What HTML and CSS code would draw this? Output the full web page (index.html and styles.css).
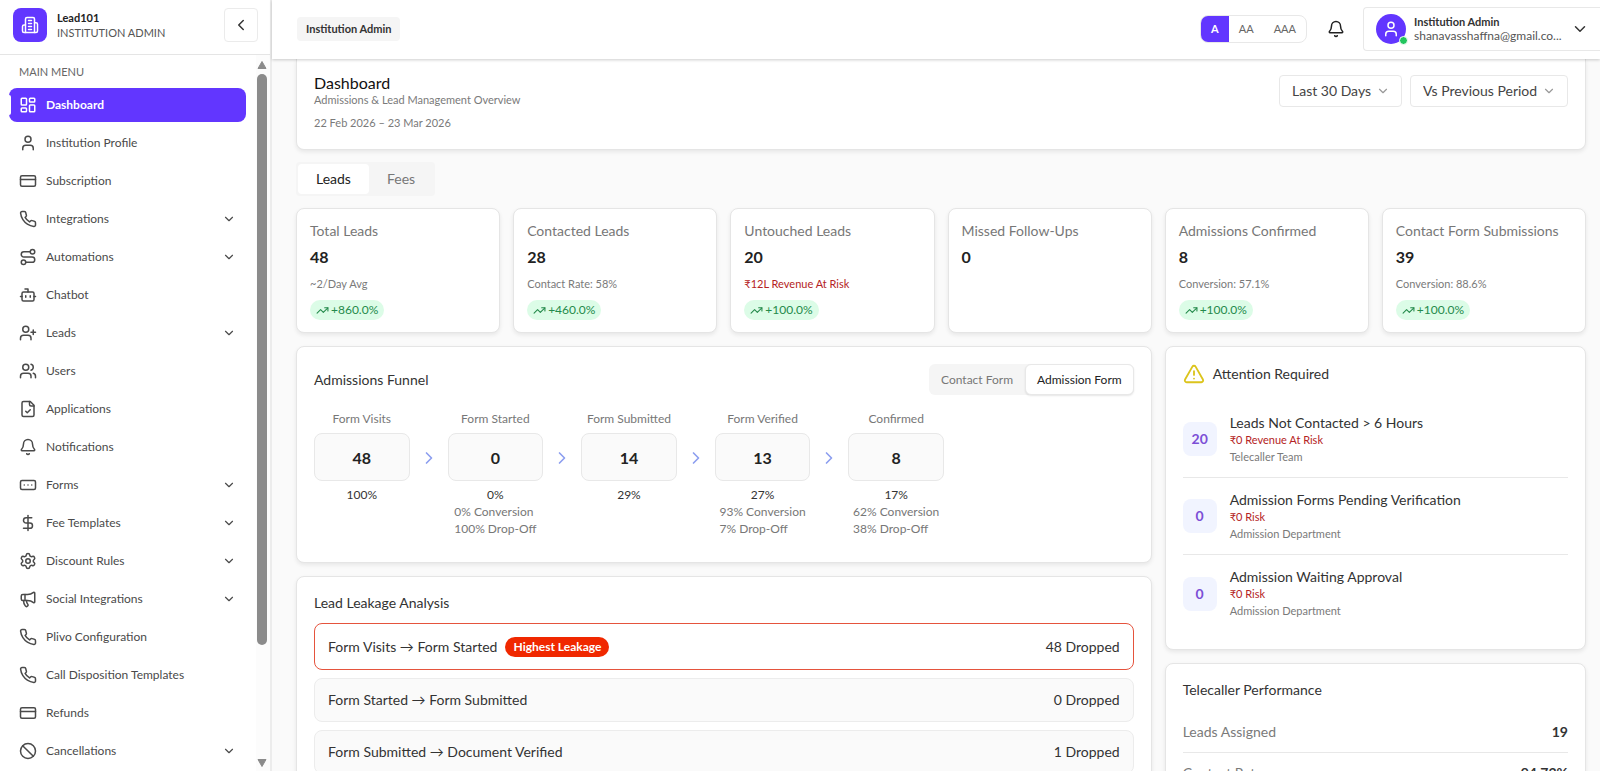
FILE: index.html
```html
<!DOCTYPE html>
<html lang="en">

<head>
    <meta charset="utf-8">
    <meta name="viewport" content="width=device-width, initial-scale=1">
    <title>Lead101 - Dashboard</title>
    <link rel="stylesheet" href="styles.css">
</head>

<body>
    <!-- icon sprite -->
    <svg class="sprite" aria-hidden="true">
        <symbol id="i-building" viewBox="0 0 24 24"><path d="M6 22V4a2 2 0 0 1 2-2h8a2 2 0 0 1 2 2v18Z"/><path d="M6 12H4a2 2 0 0 0-2 2v6a2 2 0 0 0 2 2h2"/><path d="M18 9h2a2 2 0 0 1 2 2v9a2 2 0 0 1-2 2h-2"/><path d="M10 6h4M10 10h4M10 14h4M10 18h4"/></symbol>
        <symbol id="i-dashboard" viewBox="0 0 24 24"><rect width="7" height="9" x="3" y="3" rx="1"/><rect width="7" height="5" x="14" y="3" rx="1"/><rect width="7" height="9" x="14" y="12" rx="1"/><rect width="7" height="5" x="3" y="16" rx="1"/></symbol>
        <symbol id="i-user" viewBox="0 0 24 24"><path d="M19 21v-2a4 4 0 0 0-4-4H9a4 4 0 0 0-4 4v2"/><circle cx="12" cy="7" r="4"/></symbol>
        <symbol id="i-card" viewBox="0 0 24 24"><rect width="20" height="14" x="2" y="5" rx="2"/><path d="M2 10h20"/></symbol>
        <symbol id="i-phone" viewBox="0 0 24 24"><path d="M22 16.92v3a2 2 0 0 1-2.18 2 19.79 19.79 0 0 1-8.63-3.07 19.5 19.5 0 0 1-6-6 19.79 19.79 0 0 1-3.07-8.67A2 2 0 0 1 4.11 2h3a2 2 0 0 1 2 1.72 12.84 12.84 0 0 0 .7 2.81 2 2 0 0 1-.45 2.11L8.09 9.91a16 16 0 0 0 6 6l1.27-1.27a2 2 0 0 1 2.11-.45 12.84 12.84 0 0 0 2.81.7A2 2 0 0 1 22 16.92z"/></symbol>
        <symbol id="i-route" viewBox="0 0 24 24"><circle cx="6" cy="19" r="3"/><path d="M9 19h8.5a3.5 3.5 0 0 0 0-7h-11a3.5 3.5 0 0 1 0-7H15"/><circle cx="18" cy="5" r="3"/></symbol>
        <symbol id="i-bot" viewBox="0 0 24 24"><path d="M12 8V4H8"/><rect width="16" height="12" x="4" y="8" rx="2"/><path d="M2 14h2M20 14h2M15 13v2M9 13v2"/></symbol>
        <symbol id="i-user-plus" viewBox="0 0 24 24"><path d="M16 21v-2a4 4 0 0 0-4-4H6a4 4 0 0 0-4 4v2"/><circle cx="9" cy="7" r="4"/><path d="M19 8v6M22 11h-6"/></symbol>
        <symbol id="i-users" viewBox="0 0 24 24"><path d="M16 21v-2a4 4 0 0 0-4-4H6a4 4 0 0 0-4 4v2"/><circle cx="9" cy="7" r="4"/><path d="M22 21v-2a4 4 0 0 0-3-3.87M16 3.13a4 4 0 0 1 0 7.75"/></symbol>
        <symbol id="i-file" viewBox="0 0 24 24"><path d="M15 2H6a2 2 0 0 0-2 2v16a2 2 0 0 0 2 2h12a2 2 0 0 0 2-2V7Z"/><path d="M14 2v4a2 2 0 0 0 2 2h4"/><path d="m9 15 2 2 4-4"/></symbol>
        <symbol id="i-bell" viewBox="0 0 24 24"><path d="M10.268 21a2 2 0 0 0 3.464 0"/><path d="M3.262 15.326A1 1 0 0 0 4 17h16a1 1 0 0 0 .74-1.673C19.41 13.956 18 12.499 18 8A6 6 0 0 0 6 8c0 4.499-1.411 5.956-2.738 7.326"/></symbol>
        <symbol id="i-form" viewBox="0 0 24 24"><rect width="20" height="12" x="2" y="6" rx="2"/><path d="M12 12h.01M17 12h.01M7 12h.01"/></symbol>
        <symbol id="i-dollar" viewBox="0 0 24 24"><path d="M12 2v20"/><path d="M17 5H9.5a3.5 3.5 0 0 0 0 7h5a3.5 3.5 0 0 1 0 7H6"/></symbol>
        <symbol id="i-gear" viewBox="0 0 24 24"><path d="M9.671 4.136a2.34 2.34 0 0 1 4.659 0 2.34 2.34 0 0 0 3.319 1.915 2.34 2.34 0 0 1 2.33 4.033 2.34 2.34 0 0 0 0 3.831 2.34 2.34 0 0 1-2.33 4.033 2.34 2.34 0 0 0-3.319 1.915 2.34 2.34 0 0 1-4.659 0 2.34 2.34 0 0 0-3.32-1.915 2.34 2.34 0 0 1-2.33-4.033 2.34 2.34 0 0 0 0-3.831A2.34 2.34 0 0 1 6.35 6.051a2.34 2.34 0 0 0 3.319-1.915"/><circle cx="12" cy="12" r="3"/></symbol>
        <symbol id="i-megaphone" viewBox="0 0 24 24"><path d="M11 6a13 13 0 0 0 8.4-2.8A1 1 0 0 1 21 4v12a1 1 0 0 1-1.6.8A13 13 0 0 0 11 14H5a2 2 0 0 1-2-2V8a2 2 0 0 1 2-2z"/><path d="M6 14a12 12 0 0 0 2.4 7.2 2 2 0 0 0 3.2-2.4A8 8 0 0 1 10 14"/><path d="M8 6v8"/></symbol>
        <symbol id="i-ban" viewBox="0 0 24 24"><circle cx="12" cy="12" r="10"/><path d="m4.9 4.9 14.2 14.2"/></symbol>
        <symbol id="i-down" viewBox="0 0 24 24"><path d="m6 9 6 6 6-6"/></symbol>
        <symbol id="i-left" viewBox="0 0 24 24"><path d="m15 18-6-6 6-6"/></symbol>
        <symbol id="i-right" viewBox="0 0 24 24"><path d="m9 18 6-6-6-6"/></symbol>
        <symbol id="i-trend" viewBox="0 0 24 24"><path d="M22 7l-8.500 8.500-5-5L2 17"/><path d="M16 7h6v6"/></symbol>
        <symbol id="i-alert" viewBox="0 0 24 24"><path d="m21.730 18-8-14a2 2 0 0 0-3.480 0l-8 14A2 2 0 0 0 4 21h16a2 2 0 0 0 1.730-3"/><path d="M12 9v4M12 17h.01"/></symbol>
    </svg>

    <div class="app">
        <aside class="sidebar">
            <div class="brand">
                <span class="brand-logo"><svg class="icon"><use href="#i-building"/></svg></span>
                <div class="brand-text">
                    <strong>Lead101</strong>
                    <span>INSTITUTION ADMIN</span>
                </div>
                <button class="collapse" aria-label="Collapse sidebar"><svg class="icon"><use href="#i-left"/></svg></button>
            </div>
            <div class="sidebar-body">
                <nav class="menu">
                    <h2 class="menu-title">MAIN MENU</h2>
                    <a href="#" class="menu-item active"><svg class="icon"><use href="#i-dashboard"/></svg><span>Dashboard</span></a>
                    <a href="#" class="menu-item"><svg class="icon"><use href="#i-user"/></svg><span>Institution Profile</span></a>
                    <a href="#" class="menu-item"><svg class="icon"><use href="#i-card"/></svg><span>Subscription</span></a>
                    <a href="#" class="menu-item"><svg class="icon"><use href="#i-phone"/></svg><span>Integrations</span><svg class="icon chevron"><use href="#i-down"/></svg></a>
                    <a href="#" class="menu-item"><svg class="icon"><use href="#i-route"/></svg><span>Automations</span><svg class="icon chevron"><use href="#i-down"/></svg></a>
                    <a href="#" class="menu-item"><svg class="icon"><use href="#i-bot"/></svg><span>Chatbot</span></a>
                    <a href="#" class="menu-item"><svg class="icon"><use href="#i-user-plus"/></svg><span>Leads</span><svg class="icon chevron"><use href="#i-down"/></svg></a>
                    <a href="#" class="menu-item"><svg class="icon"><use href="#i-users"/></svg><span>Users</span></a>
                    <a href="#" class="menu-item"><svg class="icon"><use href="#i-file"/></svg><span>Applications</span></a>
                    <a href="#" class="menu-item"><svg class="icon"><use href="#i-bell"/></svg><span>Notifications</span></a>
                    <a href="#" class="menu-item"><svg class="icon"><use href="#i-form"/></svg><span>Forms</span><svg class="icon chevron"><use href="#i-down"/></svg></a>
                    <a href="#" class="menu-item"><svg class="icon"><use href="#i-dollar"/></svg><span>Fee Templates</span><svg class="icon chevron"><use href="#i-down"/></svg></a>
                    <a href="#" class="menu-item"><svg class="icon"><use href="#i-gear"/></svg><span>Discount Rules</span><svg class="icon chevron"><use href="#i-down"/></svg></a>
                    <a href="#" class="menu-item"><svg class="icon"><use href="#i-megaphone"/></svg><span>Social Integrations</span><svg class="icon chevron"><use href="#i-down"/></svg></a>
                    <a href="#" class="menu-item"><svg class="icon"><use href="#i-phone"/></svg><span>Plivo Configuration</span></a>
                    <a href="#" class="menu-item"><svg class="icon"><use href="#i-phone"/></svg><span>Call Disposition Templates</span></a>
                    <a href="#" class="menu-item"><svg class="icon"><use href="#i-card"/></svg><span>Refunds</span></a>
                    <a href="#" class="menu-item"><svg class="icon"><use href="#i-ban"/></svg><span>Cancellations</span><svg class="icon chevron"><use href="#i-down"/></svg></a>
                </nav>
                <div class="scrollbar" aria-hidden="true">
                    <svg class="scroll-arrow" viewBox="0 0 10 9"><path d="M5 1 9 8H1z"/></svg>
                    <div class="scroll-track"><div class="scroll-thumb"></div></div>
                    <svg class="scroll-arrow" viewBox="0 0 10 9"><path d="M5 8 1 1h8z"/></svg>
                </div>
            </div>
        </aside>

        <div class="page">
            <header class="topbar">
                <span class="crumb">Institution Admin</span>
                <div class="text-size" role="group" aria-label="Text size">
                    <button class="active">A</button>
                    <button>AA</button>
                    <button>AAA</button>
                </div>
                <button class="bell" aria-label="Notifications"><svg class="icon"><use href="#i-bell"/></svg></button>
                <button class="account">
                    <span class="avatar"><svg class="icon"><use href="#i-user"/></svg></span>
                    <span class="account-text">
                        <strong>Institution Admin</strong>
                        <span>shanavasshaffna@gmail.co...</span>
                    </span>
                    <svg class="icon"><use href="#i-down"/></svg>
                </button>
            </header>

            <main class="content">
                <section class="card intro">
                    <div>
                        <h1>Dashboard</h1>
                        <p>Admissions &amp; Lead Management Overview</p>
                        <p class="dates">22 Feb 2026 – 23 Mar 2026</p>
                    </div>
                    <div class="filters">
                        <div class="select">
                            <select aria-label="Date range"><option>Last 30 Days</option></select>
                            <svg class="icon"><use href="#i-down"/></svg>
                        </div>
                        <div class="select">
                            <select aria-label="Comparison"><option>Vs Previous Period</option></select>
                            <svg class="icon"><use href="#i-down"/></svg>
                        </div>
                    </div>
                </section>

                <div class="tabs" role="tablist">
                    <button class="active" role="tab" aria-selected="true">Leads</button>
                    <button role="tab" aria-selected="false">Fees</button>
                </div>

                <section class="stats">
                    <article class="card stat">
                        <h3>Total Leads</h3>
                        <strong>48</strong>
                        <p>~2/Day Avg</p>
                        <span class="trend"><svg class="icon"><use href="#i-trend"/></svg>+860.0%</span>
                    </article>
                    <article class="card stat">
                        <h3>Contacted Leads</h3>
                        <strong>28</strong>
                        <p>Contact Rate: 58%</p>
                        <span class="trend"><svg class="icon"><use href="#i-trend"/></svg>+460.0%</span>
                    </article>
                    <article class="card stat">
                        <h3>Untouched Leads</h3>
                        <strong>20</strong>
                        <p class="risk">₹12L Revenue At Risk</p>
                        <span class="trend"><svg class="icon"><use href="#i-trend"/></svg>+100.0%</span>
                    </article>
                    <article class="card stat">
                        <h3>Missed Follow-Ups</h3>
                        <strong>0</strong>
                    </article>
                    <article class="card stat">
                        <h3>Admissions Confirmed</h3>
                        <strong>8</strong>
                        <p>Conversion: 57.1%</p>
                        <span class="trend"><svg class="icon"><use href="#i-trend"/></svg>+100.0%</span>
                    </article>
                    <article class="card stat">
                        <h3>Contact Form Submissions</h3>
                        <strong>39</strong>
                        <p>Conversion: 88.6%</p>
                        <span class="trend"><svg class="icon"><use href="#i-trend"/></svg>+100.0%</span>
                    </article>
                </section>

                <div class="columns">
                    <div class="column">
                        <section class="card funnel">
                            <div class="funnel-head">
                                <h2>Admissions Funnel</h2>
                                <div class="toggle">
                                    <button>Contact Form</button>
                                    <button class="active">Admission Form</button>
                                </div>
                            </div>
                            <div class="steps">
                                <div class="step">
                                    <span class="step-name">Form Visits</span>
                                    <strong>48</strong>
                                    <span class="step-share">100%</span>
                                </div>
                                <svg class="icon"><use href="#i-right"/></svg>
                                <div class="step">
                                    <span class="step-name">Form Started</span>
                                    <strong>0</strong>
                                    <span class="step-share">0%</span>
                                    <div class="step-note">0% Conversion<br>100% Drop-Off</div>
                                </div>
                                <svg class="icon"><use href="#i-right"/></svg>
                                <div class="step">
                                    <span class="step-name">Form Submitted</span>
                                    <strong>14</strong>
                                    <span class="step-share">29%</span>
                                </div>
                                <svg class="icon"><use href="#i-right"/></svg>
                                <div class="step">
                                    <span class="step-name">Form Verified</span>
                                    <strong>13</strong>
                                    <span class="step-share">27%</span>
                                    <div class="step-note">93% Conversion<br>7% Drop-Off</div>
                                </div>
                                <svg class="icon"><use href="#i-right"/></svg>
                                <div class="step">
                                    <span class="step-name">Confirmed</span>
                                    <strong>8</strong>
                                    <span class="step-share">17%</span>
                                    <div class="step-note">62% Conversion<br>38% Drop-Off</div>
                                </div>
                            </div>
                        </section>

                        <section class="card leakage">
                            <h2>Lead Leakage Analysis</h2>
                            <ul>
                                <li class="highest"><span>Form Visits → Form Started</span><em>Highest Leakage</em><b>48 Dropped</b></li>
                                <li><span>Form Started → Form Submitted</span><b>0 Dropped</b></li>
                                <li><span>Form Submitted → Document Verified</span><b>1 Dropped</b></li>
                            </ul>
                        </section>
                    </div>

                    <div class="column">
                        <section class="card attention">
                            <h2><svg class="icon"><use href="#i-alert"/></svg>Attention Required</h2>
                            <ul>
                                <li>
                                    <span class="count">20</span>
                                    <div>
                                        <h3>Leads Not Contacted &gt; 6 Hours</h3>
                                        <p class="risk">₹0 Revenue At Risk</p>
                                        <p>Telecaller Team</p>
                                    </div>
                                </li>
                                <li>
                                    <span class="count">0</span>
                                    <div>
                                        <h3>Admission Forms Pending Verification</h3>
                                        <p class="risk">₹0 Risk</p>
                                        <p>Admission Department</p>
                                    </div>
                                </li>
                                <li>
                                    <span class="count">0</span>
                                    <div>
                                        <h3>Admission Waiting Approval</h3>
                                        <p class="risk">₹0 Risk</p>
                                        <p>Admission Department</p>
                                    </div>
                                </li>
                            </ul>
                        </section>

                        <section class="card performance">
                            <h2>Telecaller Performance</h2>
                            <dl>
                                <div><dt>Leads Assigned</dt><dd>19</dd></div>
                                <div><dt>Contact Rate</dt><dd>94.73%</dd></div>
                            </dl>
                        </section>
                    </div>
                </div>
            </main>
        </div>
    </div>
</body>

</html>
```
FILE: styles.css
```css
* {
    box-sizing: border-box;
    margin: 0;
    padding: 0;
}

body {
    font-family: Lato, "Open Sans", sans-serif;
    font-size: 14px;
    line-height: 20px;
    color: #333;
    background: #fafafa;
}

h1, h2, h3 {
    font-weight: 400;
}

ul {
    list-style: none;
}

button, select {
    font: inherit;
    color: inherit;
    background: none;
    border: 0;
    cursor: pointer;
}

a {
    color: inherit;
    text-decoration: none;
}

.sprite {
    display: none;
}

.icon {
    width: 18px;
    height: 18px;
    flex: none;
    fill: none;
    stroke: currentColor;
    stroke-width: 2;
    stroke-linecap: round;
    stroke-linejoin: round;
}

.app {
    display: flex;
    height: 100vh;
    overflow: hidden;
}

/* Sidebar */
.sidebar {
    display: flex;
    flex-direction: column;
    flex: none;
    width: 272px;
    background: #fff;
    border-right: 2px solid #ececec;
}

.brand {
    display: flex;
    align-items: center;
    gap: 10px;
    flex: none;
    height: 55px;
    padding: 0 12px 5px 13px;
    border-bottom: 1px solid #e5e5e5;
}

.brand-logo {
    display: flex;
    align-items: center;
    justify-content: center;
    width: 34px;
    height: 34px;
    border-radius: 8px;
    color: #fff;
    background: #6236ff;
}

.brand-text {
    flex: 1;
    font-size: 11px;
    line-height: 15px;
    color: #555;
}

.brand-text strong {
    display: block;
    color: #222;
}

.collapse {
    display: flex;
    align-items: center;
    justify-content: center;
    width: 34px;
    height: 34px;
    border: 1px solid #ebebeb;
    border-radius: 4px;
}

.sidebar-body {
    display: flex;
    flex: 1;
    min-height: 0;
}

.menu {
    display: flex;
    flex-direction: column;
    gap: 4px;
    flex: 1;
    padding: 7px 10px 0 9px;
    overflow: hidden;
}

.menu-title {
    flex: none;
    padding: 0 10px 2px;
    font-size: 11px;
    line-height: 20px;
    color: #666;
}

.menu-item {
    display: flex;
    align-items: center;
    gap: 9px;
    flex: none;
    height: 34px;
    padding: 0 10px;
    font-size: 12px;
    color: #4a4a4a;
    border-radius: 8px;
}

.menu-item.active {
    position: relative;
    font-weight: 700;
    color: #fff;
    background: #6236ff;
}

.menu-item.active::before {
    content: "";
    position: absolute;
    top: 7px;
    bottom: 7px;
    left: 0;
    width: 2px;
    background: #fff;
    border-radius: 0 2px 2px 0;
}

.menu-item .chevron {
    width: 14px;
    height: 14px;
    margin-left: auto;
}

.scrollbar {
    display: flex;
    flex-direction: column;
    align-items: center;
    gap: 4px;
    flex: none;
    width: 14px;
    padding: 5px 2px 3px 0;
    background: #fcfcfc;
}

.scroll-arrow {
    width: 10px;
    height: 10px;
    fill: #8b8b8b;
    stroke: #8b8b8b;
    stroke-linejoin: round;
}

.scroll-track {
    flex: 1;
}

.scroll-thumb {
    width: 10px;
    height: 84%;
    border-radius: 5px;
    background: #8b8b8b;
}

/* Top bar */
.page {
    display: flex;
    flex-direction: column;
    flex: 1;
    min-width: 0;
}

.topbar {
    position: relative;
    z-index: 1;
    display: flex;
    align-items: center;
    flex: none;
    height: 59px;
    padding-left: 25px;
    padding-bottom: 2px;
    background: #fff;
    box-shadow: 0 1px 3px rgba(0, 0, 0, .2);
}

.crumb {
    margin-right: auto;
    padding: 2px 9px;
    font-size: 11px;
    font-weight: 700;
    background: #f5f5f5;
    border-radius: 4px;
}

.text-size {
    display: flex;
    height: 28px;
    border: 1px solid #e8e8e8;
    border-radius: 8px;
    overflow: hidden;
}

.text-size button {
    padding: 0 10px;
    font-size: 11px;
    color: #666;
}

.text-size .active {
    font-weight: 700;
    color: #fff;
    background: #6236ff;
}

.bell {
    display: flex;
    margin: 0 18px 0 20px;
    color: #222;
}

.account {
    display: flex;
    align-items: center;
    gap: 8px;
    width: 237px;
    height: 44px;
    padding: 0 11px 0 12px;
    text-align: left;
    border: 1px solid #e8e8e8;
    border-right: 0;
    border-radius: 4px 0 0 4px;
}

.avatar {
    position: relative;
    display: flex;
    align-items: center;
    justify-content: center;
    flex: none;
    width: 30px;
    height: 30px;
    border-radius: 50%;
    color: #fff;
    background: #6236ff;
}

.avatar::after {
    content: "";
    position: absolute;
    right: -2px;
    bottom: -1px;
    width: 7px;
    height: 7px;
    border: 1px solid #fff;
    border-radius: 50%;
    background: #22c55e;
}

.account-text {
    flex: 1;
    font-size: 12px;
    line-height: 14px;
    color: #555;
}

.account-text strong {
    display: block;
    font-size: 11px;
    color: #333;
}

/* Content */
.content {
    flex: 1;
    min-height: 0;
    padding: 0 14px 0 24px;
    overflow: hidden;
}

.card {
    background: #fff;
    border: 1px solid #e5e5e5;
    border-radius: 8px;
    box-shadow: 0 2px 4px rgba(0, 0, 0, .08);
}

.card h2 {
    font-size: 14px;
}

.card p {
    font-size: 11px;
    line-height: 17px;
    color: #7a7a7a;
}

.card .risk {
    color: #b42324;
}

.intro {
    display: flex;
    justify-content: space-between;
    align-items: flex-start;
    padding: 16px 17px;
    border-top: 0;
    border-radius: 0 0 8px 8px;
}

.intro h1 {
    font-size: 16px;
    line-height: 16px;
    color: #111;
}

.intro .dates {
    margin-top: 6px;
    padding-bottom: 2px;
}

.filters {
    display: flex;
    gap: 8px;
}

.select {
    position: relative;
}

.select select {
    height: 32px;
    padding: 0 29px 0 12px;
    appearance: none;
    color: #444;
    border: 1px solid #e8e8e8;
    border-radius: 4px;
}

.select .icon {
    position: absolute;
    top: 9px;
    right: 12px;
    width: 14px;
    height: 14px;
    color: #999;
    pointer-events: none;
}

.tabs {
    display: inline-flex;
    margin: 12px 0;
    padding: 2px;
    background: #f5f5f5;
    border-radius: 4px;
    vertical-align: top;
}

.tabs button {
    height: 30px;
    padding: 0 18px;
    color: #777;
    border-radius: 4px;
}

.tabs .active {
    color: #222;
    background: #fff;
}

.stats {
    display: grid;
    grid-template-columns: repeat(6, 1fr);
    gap: 13px;
}

.stat {
    min-height: 125px;
    padding: 12px 13px 10px;
}

.stat h3 {
    font-size: 14px;
    color: #777;
}

.stat strong {
    display: block;
    margin: 6px 0 8px;
    font-size: 16px;
    color: #222;
}

.trend {
    display: inline-flex;
    align-items: center;
    gap: 2px;
    margin-top: 8px;
    padding: 0 6px;
    font-size: 12px;
    color: #248a4b;
    background: #dcfce7;
    border-radius: 10px;
    vertical-align: top;
}

.trend .icon {
    width: 13px;
    height: 13px;
}

.columns {
    display: grid;
    grid-template-columns: repeat(6, 1fr);
    gap: 13px;
    align-items: start;
    margin-top: 13px;
}

.column {
    display: flex;
    flex-direction: column;
    gap: 13px;
    grid-column: span 4;
}

.column + .column {
    grid-column: span 2;
}

.funnel {
    padding: 17px 17px 25px;
}

.funnel-head {
    display: flex;
    align-items: center;
    justify-content: space-between;
}

.toggle {
    display: flex;
    height: 31px;
    background: #f5f5f5;
    border-radius: 6px;
}

.toggle button {
    padding: 0 11px;
    font-size: 12px;
    color: #777;
    border: 1px solid transparent;
    border-radius: 6px;
}

.toggle .active {
    color: #222;
    background: #fff;
    border-color: #e8e8e8;
    box-shadow: 0 1px 2px rgba(0, 0, 0, .1);
}

.steps {
    display: flex;
    gap: 9px;
    max-width: 630px;
    margin-top: 15px;
}

.steps > .icon {
    width: 20px;
    height: 20px;
    margin-top: 38px;
    color: #8c9eef;
}

.step {
    display: flex;
    flex-direction: column;
    align-items: center;
    flex: 1 1 0;
    min-width: 0;
    font-size: 12px;
    line-height: 17px;
    white-space: nowrap;
}

.step-name {
    color: #777;
}

.step strong {
    display: flex;
    align-items: center;
    justify-content: center;
    width: 100%;
    height: 48px;
    margin: 6px 0 5px;
    font-size: 16px;
    color: #222;
    background: #fafafa;
    border: 1px solid #e8e8e8;
    border-radius: 8px;
}

.step-note {
    color: #777;
}

.leakage {
    padding: 16px 17px;
}

.leakage ul {
    display: flex;
    flex-direction: column;
    gap: 8px;
    margin-top: 10px;
}

.leakage li {
    display: flex;
    align-items: center;
    gap: 8px;
    height: 44px;
    padding: 0 13px;
    background: #fafafa;
    border: 1px solid #ececec;
    border-radius: 8px;
}

.leakage .highest {
    height: 47px;
    background: #fff;
    border-color: #e5533d;
}

.leakage em {
    padding: 0 8px;
    font-size: 12px;
    font-style: normal;
    font-weight: 700;
    color: #fff;
    background: #f02800;
    border-radius: 10px;
}

.leakage b {
    margin-left: auto;
    font-weight: 400;
}

.attention {
    padding: 17px;
}

.attention h2 {
    display: flex;
    align-items: center;
    gap: 8px;
    height: 20px;
}

.attention h2 .icon {
    width: 22px;
    height: 22px;
    color: #dcc41c;
}

.attention ul {
    margin-top: 17px;
}

.attention li {
    display: flex;
    align-items: center;
    gap: 13px;
    height: 77px;
    border-bottom: 1px solid #e8e8e8;
}

.attention li:last-child {
    border-bottom: 0;
}

.attention h3 {
    font-size: 14px;
    line-height: 17px;
}

.count {
    display: flex;
    align-items: center;
    justify-content: center;
    flex: none;
    width: 34px;
    height: 34px;
    font-weight: 700;
    color: #7c4fd6;
    background: #f1f4ff;
    border-radius: 8px;
}

.performance {
    padding: 16px 17px;
}

.performance dl {
    margin-top: 12px;
}

.performance dl div {
    display: flex;
    align-items: center;
    justify-content: space-between;
    height: 41px;
    border-bottom: 1px solid #e8e8e8;
}

.performance dt {
    color: #7a7a7a;
}

.performance dd {
    font-weight: 700;
}
```
